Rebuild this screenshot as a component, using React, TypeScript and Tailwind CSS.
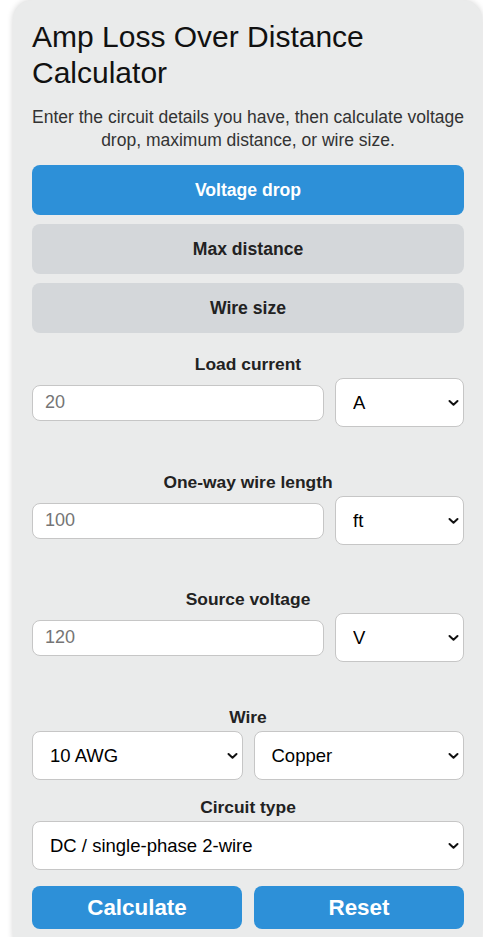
import React, { useState } from 'react';

const Chevron = () => (
  <svg
    className="pointer-events-none absolute right-[5px] top-1/2 -translate-y-1/2"
    width="11"
    height="7"
    viewBox="0 0 11 7"
    fill="none"
  >
    <path d="M1.5 1.5 L5.5 5.3 L9.5 1.5" stroke="#111" strokeWidth="2" strokeLinecap="round" strokeLinejoin="round" />
  </svg>
);

const Select = ({ value, options, className }: { value: string; options: string[]; className?: string }) => (
  <div className={`relative ${className ?? ''}`}>
    <select
      defaultValue={value}
      className="h-[49px] w-full appearance-none rounded-lg border border-[#c6c6c6] bg-white pl-[17px] pr-6 text-[18.5px] text-black outline-none"
    >
      {options.map((o) => (
        <option key={o}>{o}</option>
      ))}
    </select>
    <Chevron />
  </div>
);

const Field = ({ label, placeholder, unit, units }: { label: string; placeholder: string; unit: string; units: string[] }) => (
  <div>
    <div className="mb-1 text-center text-[17.4px] font-bold leading-5 text-[#222]">{label}</div>
    <div className="flex items-center gap-[11px]">
      <input
        type="text"
        placeholder={placeholder}
        className="h-9 min-w-0 flex-1 rounded-lg border border-[#c6c6c6] bg-white px-3 text-[18px] text-black outline-none placeholder:text-[#757575]"
      />
      <Select value={unit} options={units} className="w-[129px]" />
    </div>
  </div>
);

const App = () => {
  const [mode, setMode] = useState('Voltage drop');
  const modes = ['Voltage drop', 'Max distance', 'Wire size'];

  return (
    <div className="min-h-screen bg-white pl-[13px] pr-px font-['Liberation_Sans',Arial,sans-serif]">
      <div className="rounded-[20px] bg-[#eaebeb] pb-6 pl-[19px] pr-[18px] pt-[19px] shadow-[0_0_6px_rgba(0,0,0,0.18)]">
        <h1 className="text-[30px] font-normal leading-[36px] text-[#111]">Amp Loss Over Distance Calculator</h1>
        <p className="mt-[15px] text-center text-[17.5px] leading-[23px] text-[#333]">
          Enter the circuit details you have, then calculate voltage drop, maximum distance, or wire size.
        </p>

        <div className="mt-[13px] flex flex-col gap-[9px]">
          {modes.map((m) => (
            <button
              key={m}
              type="button"
              onClick={() => setMode(m)}
              className={
                mode === m
                  ? 'h-[50px] rounded-lg bg-[#2d90d8] text-[17.6px] font-bold text-white'
                  : 'h-[50px] rounded-lg bg-[#d4d7da] text-[17.6px] font-bold text-[#222]'
              }
            >
              {m}
            </button>
          ))}
        </div>

        <div className="mt-[21px]">
          <Field label="Load current" placeholder="20" unit="A" units={['A', 'mA']} />
        </div>
        <div className="mt-[45px]">
          <Field label="One-way wire length" placeholder="100" unit="ft" units={['ft', 'm']} />
        </div>
        <div className="mt-11">
          <Field label="Source voltage" placeholder="120" unit="V" units={['V', 'kV']} />
        </div>

        <div className="mt-[45px]">
          <div className="mb-1 text-center text-[17.4px] font-bold leading-5 text-[#222]">Wire</div>
          <div className="grid grid-cols-2 gap-[11px]">
            <Select value="10 AWG" options={['14 AWG', '12 AWG', '10 AWG', '8 AWG', '6 AWG']} />
            <Select value="Copper" options={['Copper', 'Aluminum']} />
          </div>
        </div>

        <div className="mt-[17px]">
          <div className="mb-1 text-center text-[17.4px] font-bold leading-5 text-[#222]">Circuit type</div>
          <Select value="DC / single-phase 2-wire" options={['DC / single-phase 2-wire', 'Three-phase']} />
        </div>

        <div className="mt-4 grid grid-cols-2 gap-3">
          <button type="button" className="h-[43px] rounded-lg bg-[#2d90d8] text-[22.4px] font-bold text-white">
            Calculate
          </button>
          <button type="button" className="h-[43px] rounded-lg bg-[#2d90d8] text-[22.4px] font-bold text-white">
            Reset
          </button>
        </div>
      </div>
    </div>
  );
};

export default App;
